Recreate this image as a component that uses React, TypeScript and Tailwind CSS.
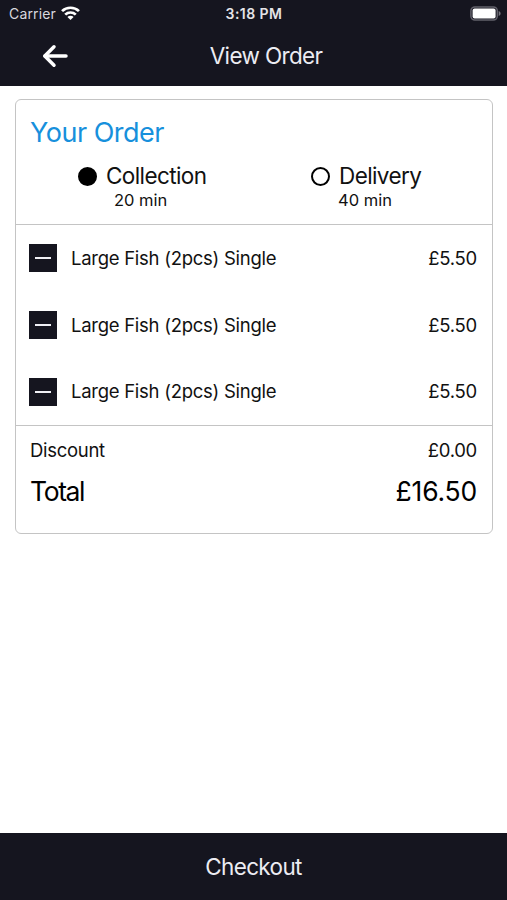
const ITEMS = [
  { id: 1, name: "Large Fish (2pcs) Single", price: "£5.50" },
  { id: 2, name: "Large Fish (2pcs) Single", price: "£5.50" },
  { id: 3, name: "Large Fish (2pcs) Single", price: "£5.50" },
];

function StatusBar() {
  return (
    <div className="grid h-7 grid-cols-3 items-center pb-px pl-[9px] pr-[6px] text-[14px] text-[#d8d8de]">
      <div className="flex items-center gap-[5px]">
        <span className="tracking-[0.15px]">Carrier</span>
        <svg width="19" height="14" viewBox="0 0 18 14" preserveAspectRatio="none" className="-mt-[2px]" fill="none" stroke="#fff" strokeWidth="2.6">
          <path d="M1 5.1a11.3 11.3 0 0 1 16 0" />
          <path d="M4 8.6a7.1 7.1 0 0 1 10 0" />
          <path d="M9 13.9 6.1 11a4 4 0 0 1 5.8 0z" fill="#fff" stroke="none" />
        </svg>
      </div>
      <span className="-ml-[2px] text-center font-semibold tracking-[0.45px] text-[#e4e4e8]">3:18 PM</span>
      <svg className="justify-self-end" width="31" height="15" viewBox="0 0 31 15">
        <rect x="0.9" y="0.9" width="26.4" height="13.2" rx="4" fill="none" stroke="#62616b" strokeWidth="1.5" />
        <rect x="2.6" y="2.6" width="23" height="9.8" rx="2" fill="#fff" />
        <path d="M28.7 5v5c1.2-.4 1.9-1.3 1.9-2.5s-.7-2.1-1.9-2.5z" fill="#77767f" />
      </svg>
    </div>
  );
}

function Header() {
  return (
    <header className="h-[86px] bg-[#15151f]">
      <StatusBar />
      <div className="grid h-14 grid-cols-[1fr_auto_1fr] items-center">
        <button aria-label="Back" className="ml-[42px] w-[26px]">
          <svg width="26" height="24" viewBox="0 0 26 24" fill="none" stroke="#fff" strokeWidth="3.5" strokeLinecap="round" strokeLinejoin="round">
            <path d="M12 2.8 2.8 12l9.2 9.2" />
            <path d="M3 12h21" />
          </svg>
        </button>
        <h1 className="ml-[25px] text-[22.5px] tracking-[-0.65px] text-[#ececf2]">View Order</h1>
      </div>
    </header>
  );
}

function Option({ label, time, selected }: { label: string; time: string; selected?: boolean }) {
  return (
    <div>
      <div className="flex h-7 items-center gap-[9px]">
        <span className={`size-[19px] rounded-full border-2 border-black ${selected ? "bg-black" : ""}`} />
        <span className="text-[22.5px] tracking-[-0.6px]">{label}</span>
      </div>
      <div className={`text-[16.5px] leading-5 ${selected ? "pl-9" : "pl-[27px]"}`}>{time}</div>
    </div>
  );
}

export default function App() {
  return (
    <div className="flex h-[900px] w-[507px] flex-col bg-white font-['Inter',sans-serif] text-[#111]">
      <Header />
      <main className="flex-1 pl-[15px] pr-[14px] pt-[13px]">
        <section className="flex h-[435px] flex-col rounded-md border border-[#c4c4c4]">
          <div className="h-[125px] border-b border-[#c4c4c4]">
            <h2 className="pl-[14px] pt-[15px] text-[27px] leading-9 tracking-[-0.5px] text-[#1790dc]">Your Order</h2>
            <div className="mt-[11px] grid grid-cols-2">
              <div className="pl-[62px]">
                <Option label="Collection" time="20 min" selected />
              </div>
              <div className="pl-[57px]">
                <Option label="Delivery" time="40 min" />
              </div>
            </div>
          </div>
          <ul className="h-[201px] border-b border-[#c4c4c4]">
            {ITEMS.map((item) => (
              <li key={item.id} className="flex h-1/3 items-center pl-[13px] pr-[15px] text-[18.5px] tracking-[-0.27px]">
                <button aria-label="Remove" className="mr-[14px] flex size-7 items-center justify-center bg-[#15151f]">
                  <span className="h-[2px] w-4 bg-[#f0f0f5]" />
                </button>
                <span className="pt-px">{item.name}</span>
                <span className="ml-auto pt-px">{item.price}</span>
              </li>
            ))}
          </ul>
          <div className="flex items-center justify-between pl-[14px] pr-[15px] pt-[10px] text-[18.5px] leading-7 tracking-[-0.3px]">
            <span>Discount</span>
            <span>£0.00</span>
          </div>
          <div className="flex items-center justify-between pl-[14px] pr-[15px] pt-[9px] text-[26.5px] leading-9 text-black">
            <span className="tracking-[-1.4px]">Total</span>
            <span className="tracking-[-0.2px]">£16.50</span>
          </div>
        </section>
      </main>
      <button className="h-[67px] bg-[#15151f] text-[22.5px] tracking-[-0.65px] text-[#ececf2]">Checkout</button>
    </div>
  );
}
